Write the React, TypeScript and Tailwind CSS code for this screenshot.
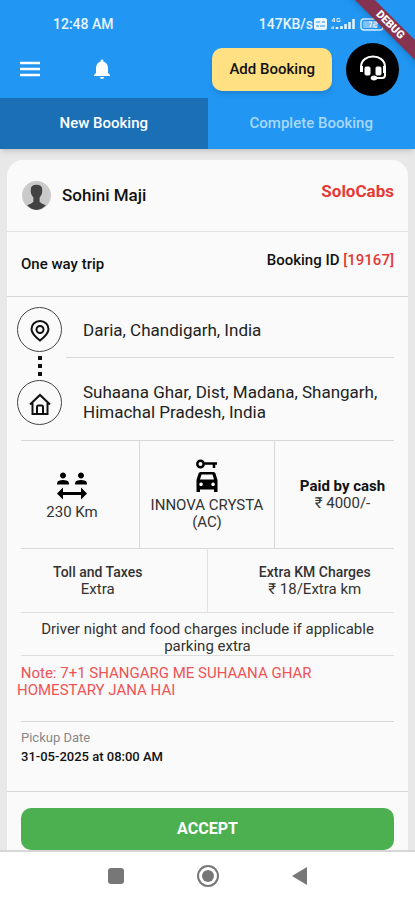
import { type ReactNode } from "react";
import { MdNotifications, MdSocialDistance } from "react-icons/md";

function StatusBar() {
  return (
    <div className="flex h-12 items-center justify-between pr-7 pl-[53px] text-sm leading-5 font-medium text-white/90">
      <span>12:48 AM</span>
      <div className="flex items-center">
        <span>147KB/s</span>
        <svg className="h-4 w-[74px]" viewBox="0 0 74 16" fill="none" aria-hidden="true">
          <rect x="1" y="2" width="13" height="12" rx="2" fill="#e9f5ff" />
          <path d="M3 6h4M9 6h3M3 10h3M7 10h5" stroke="#2196f3" strokeWidth="1" />
          <path d="M21 2l-2 3h3M21.500 2v4M27 2.500h-3v3h3v-2M18 12h3M20 10v3" stroke="#d8edff" strokeWidth="1" />
          <path d="M24 13v-2M28.500 13v-3M32.500 13V8M36.500 13V6M40.500 13V3" stroke="#e9f5ff" strokeWidth="2.500" />
          <rect x="48" y="3" width="22" height="11" rx="3" stroke="#d8edff" strokeWidth="1.500" />
          <rect x="50" y="5" width="15" height="7" rx="1" fill="#7fc3fa" />
          <path d="M56 6h3l-2 5M61 6h3v2h-3v3h3" stroke="#fff" strokeWidth="1" />
          <path d="M72 7v3" stroke="#d8edff" strokeWidth="2" />
        </svg>
      </div>
    </div>
  );
}

function Headset() {
  return (
    <svg className="size-8" viewBox="0 0 32 32" fill="none" stroke="#fff" aria-hidden="true">
      <path d="M4 18v-4C4 0 28 0 28 14v8q0 3-3 3h-6" strokeWidth="2" />
      <rect x="8" y="14" width="5" height="8" rx="1" fill="#fff" strokeWidth="1" />
      <rect x="19" y="14" width="5" height="8" rx="1" fill="#fff" strokeWidth="1" />
      <path d="M4.500 13v6M27.500 13v7" strokeWidth="3" />
      <ellipse cx="17" cy="25" rx="3" ry="2" fill="#fff" strokeWidth="1" />
    </svg>
  );
}

function CarKey() {
  return (
    <svg className="mb-1 h-[34px] w-6" viewBox="0 0 24 34" fill="none" stroke="#000" aria-hidden="true">
      <circle cx="5.500" cy="5" r="3.200" strokeWidth="2.500" />
      <path d="M8.500 4.500H22M19 4.500V9" strokeWidth="2.500" />
      <path
        d="M5.500 13h13q1.500 0 2 1.500L22.500 21v12h-3.500v-2.500H5V33H1.500V21l2-6.500q.5-1.500 2-1.500zM6.500 15.500 5 20.500h14l-1.500-5zM6 23.500a1.800 1.800 0 1 0 .1 0zM18 23.500a1.800 1.800 0 1 0 .1 0z"
        fill="#000"
        fillRule="evenodd"
        stroke="none"
      />
    </svg>
  );
}

function Stop({ children }: { children: ReactNode }) {
  return (
    <div className="flex size-[45px] shrink-0 items-center justify-center rounded-full border border-[#444]">
      {children}
    </div>
  );
}

export default function App() {
  return (
    <div className="flex min-h-screen flex-col overflow-x-hidden bg-[#e8e8e8] font-['Roboto','Noto_Sans',sans-serif] text-[#222]">
      <header className="relative z-10 overflow-hidden bg-[#2196f3] shadow-md">
        <StatusBar />
        <div className="flex h-[50px] items-center pr-4 pb-2 pl-[18px]">
          <button type="button" aria-label="Menu" className="text-white">
            <svg className="size-6" viewBox="0 0 24 24" stroke="currentColor" strokeWidth="2.500" aria-hidden="true">
              <path d="M2 6h20M2 12h20M2 18h20" />
            </svg>
          </button>
          <button type="button" aria-label="Notifications" className="ml-12 text-white">
            <MdNotifications className="size-6" />
          </button>
          <button
            type="button"
            className="ml-auto h-[43px] rounded-[10px] bg-[#ffe082] px-[17px] text-[15px] font-medium text-[#111] shadow-md"
          >
            Add Booking
          </button>
          <button
            type="button"
            aria-label="Support"
            className="ml-[14px] flex size-[53px] items-center justify-center rounded-full bg-black"
          >
            <Headset />
          </button>
        </div>
        <nav className="grid h-[51px] grid-cols-2 text-[15px] font-medium">
          <button type="button" className="bg-[#1a6fb5] text-white">
            New Booking
          </button>
          <button type="button" className="text-[#a9d8fd]">
            Complete Booking
          </button>
        </nav>
        <div className="absolute top-[18px] -right-10 flex h-[14px] w-[130px] rotate-45 items-center justify-center bg-[#85334f] text-[11px] font-black text-white shadow-md">
          DEBUG
        </div>
      </header>

      <main className="flex-1 px-[7px] pt-[11px]">
        <article className="rounded-t-2xl bg-[#fafafa]">
          <div className="flex h-[72px] items-center justify-between border-b border-[#e2e2e2] px-[14px]">
            <div className="flex items-center gap-[10px]">
              <svg className="size-[31px]" viewBox="0 0 30 30" aria-hidden="true">
                <circle cx="15" cy="15" r="14" fill="#cacaca" />
                <path
                  d="M9.500 9q0-4.500 5.500-4.500T20.500 9q.5 5-2.500 8v4q2 2 6 3.500-4 4.500-9 4.500t-9-4.500q4-1.500 6-3.500v-4q-3-3-2.500-8"
                  fill="#424242"
                />
              </svg>
              <h2 className="text-[17px] font-medium text-[#111]">Sohini Maji</h2>
            </div>
            <span className="pb-2 text-[17px] font-bold text-[#e53935]">SoloCabs</span>
          </div>

          <div className="flex h-[65px] items-center justify-between border-b border-[#d8d8d8] px-[14px] text-[15px] font-medium text-[#111]">
            <span>One way trip</span>
            <span className="pb-2">
              Booking ID <span className="text-[#e53935]">[19167]</span>
            </span>
          </div>

          <div className="flex gap-1 pt-[10px] pr-[14px] pl-[10px] text-[17px] leading-5">
            <div className="flex flex-col items-center">
              <Stop>
                <svg className="size-6" viewBox="0 0 24 24" fill="none" stroke="#111" strokeWidth="2" aria-hidden="true">
                  <path d="M12 22.500Q3.500 16 3.500 11a8.500 8 0 0 1 17 0q0 5-8.500 11.500z" />
                  <circle cx="12" cy="11.500" r="3.500" />
                </svg>
              </Stop>
              <div className="flex h-7 flex-col justify-evenly" aria-hidden="true">
                <i className="size-1 bg-[#111]" />
                <i className="size-1 bg-[#111]" />
                <i className="size-1 bg-[#111]" />
              </div>
              <Stop>
                <svg className="size-6" viewBox="0 0 24 24" fill="none" stroke="#111" strokeWidth="2" aria-hidden="true">
                  <path d="M2 13.500 12 4l10 9.500M4.500 12v11h15V12" />
                  <path d="M9 23v-7q0-1.500 1.500-1.500h3q1.500 0 1.500 1.500v7" />
                </svg>
              </Stop>
            </div>
            <div className="flex min-w-0 flex-1 flex-col">
              <p className="flex h-[51px] items-center border-b border-[#d8d8d8] pb-1 pl-[17px]">
                Daria, Chandigarh, India
              </p>
              <p className="flex h-[82px] items-center pt-[14px] pb-2 pl-[17px]">
                Suhaana Ghar, Dist, Madana, Shangarh, Himachal Pradesh, India
              </p>
            </div>
          </div>

          <div className="mx-[14px] text-center text-[15px] leading-[17px] text-[#333]">
            <div className="grid h-[109px] grid-cols-[119fr_135fr_119fr] divide-x divide-[#d8d8d8] border-y border-[#d8d8d8]">
              <div className="flex flex-col items-center justify-center pr-4">
                <MdSocialDistance className="size-9 text-black" />
                <span>230 Km</span>
              </div>
              <div className="flex flex-col items-center justify-center">
                <CarKey />
                <span>
                  INNOVA CRYSTA
                  <br />
                  (AC)
                </span>
              </div>
              <div className="flex flex-col items-center justify-center pl-4">
                <strong className="font-bold text-[#111]">Paid by cash</strong>
                <span>₹ 4000/-</span>
              </div>
            </div>
            <div className="grid h-[63px] grid-cols-2 divide-x divide-[#e2e2e2]">
              <div className="flex flex-col items-center justify-center pr-8">
                <strong className="text-sm leading-[17px] font-medium">Toll and Taxes</strong>
                <span>Extra</span>
              </div>
              <div className="flex flex-col items-center justify-center pl-7">
                <strong className="text-sm leading-[17px] font-medium">Extra KM Charges</strong>
                <span>₹ 18/Extra km</span>
              </div>
            </div>
            <p className="border-y border-[#dedede] px-2 pt-2">
              Driver night and food charges include if applicable parking extra
            </p>
          </div>

          <p className="h-[65px] pt-[9px] pr-16 pl-[10px] text-[15px] leading-[17px] whitespace-pre-wrap text-[#ee5355]">
            {" Note: 7+1 SHANGARG ME SUHAANA GHAR HOMESTARY JANA HAI"}
          </p>

          <div className="mx-[14px] h-[70px] border-t border-[#d8d8d8] pt-[6px] leading-[19px]">
            <p className="text-[13px] leading-[19px] text-[#888]">Pickup Date</p>
            <p className="text-[13px] leading-[19px] font-medium text-[#111]">31-05-2025 at 08:00 AM</p>
          </div>

          <div className="border-t border-[#d8d8d8] px-[14px] pt-4">
            <button
              type="button"
              className="block h-[42px] w-full rounded-[10px] bg-[#4caf50] text-base font-bold text-white"
            >
              ACCEPT
            </button>
          </div>
        </article>
      </main>

      <footer className="flex h-[50px] items-center justify-center gap-[73px] border-t-2 border-[#d6d6d6] bg-white">
        <button type="button" aria-label="Recent apps" className="size-4 rounded-[3px] bg-[#777]" />
        <button
          type="button"
          aria-label="Home"
          className="flex size-[22px] items-center justify-center rounded-full border-2 border-[#777]"
        >
          <span className="size-3 rounded-full bg-[#777]" />
        </button>
        <button type="button" aria-label="Back">
          <svg className="h-[18px] w-4" viewBox="0 0 16 18" aria-hidden="true">
            <path d="M15 0v18L0 9z" fill="#777" />
          </svg>
        </button>
      </footer>
    </div>
  );
}
